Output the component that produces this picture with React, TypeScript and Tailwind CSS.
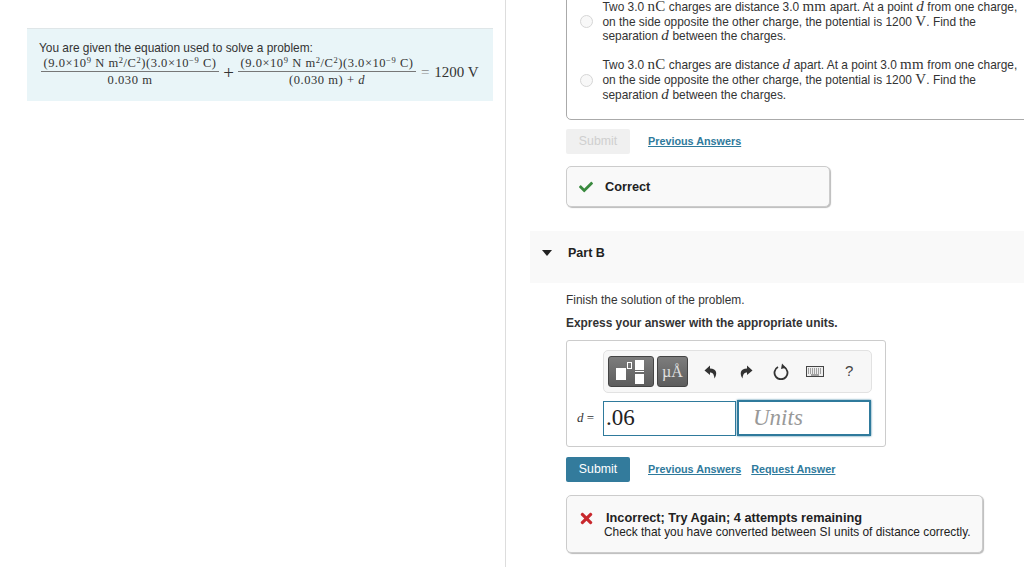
import { FaCheck, FaTimes } from "react-icons/fa";

const sans = "font-['Liberation_Sans',Arial,sans-serif]";
const serif = "font-['Liberation_Serif','Times_New_Roman',serif]";

function Numerator() {
    return (
        <span>
            (9.0×10<sup className="text-[8.5px] leading-none">9</sup> N m<sup className="text-[8.5px] leading-none">2</sup>/C<sup className="text-[8.5px] leading-none">2</sup>)(3.0×10<sup className="text-[8.5px] leading-none">−9</sup> C)
        </span>
    );
}

function Fraction({ children }: { children: React.ReactNode }) {
    return (
        <div className="flex flex-col items-center w-[178px] text-[12.5px] tracking-[0.55px] leading-[14px] text-[#333]">
            <div className="pb-[1px] whitespace-nowrap"><Numerator /></div>
            <div className="w-full border-t border-[#777] pt-[1px] text-center">{children}</div>
        </div>
    );
}

function Choice({ first }: { first: boolean }) {
    const math = `${serif} text-[15px] leading-[0] tracking-[0.3px]`;
    return (
        <div className="flex items-center">
            <div className="w-[13px] h-[13px] rounded-full border border-[#d6d6d6] bg-[#f8f8f8] ml-[13px] mr-[9.5px] shrink-0" />
            <p className="text-[11.9px] leading-[14.6px] text-[#333] whitespace-nowrap">
                {first ? (
                    <>
                        Two 3.0 <span className={math}>nC</span> charges are distance 3.0 <span className={math}>mm</span> apart. At a point <i className={math}>d</i> from one charge,
                    </>
                ) : (
                    <>
                        Two 3.0 <span className={math}>nC</span> charges are distance <i className={math}>d</i> apart. At a point 3.0 <span className={math}>mm</span> from one charge,
                    </>
                )}
                <br />
                on the side opposite the other charge, the potential is 1200 <span className={math}>V</span>. Find the
                <br />
                separation <i className={math}>d</i> between the charges.
            </p>
        </div>
    );
}

function LinkText({ children }: { children: React.ReactNode }) {
    return <a className="text-[10.8px] font-bold text-[#2f7a9c] underline">{children}</a>;
}

function Toolbar() {
    return (
        <div className="ml-[36px] w-[269px] h-[43px] rounded-[5px] border border-[#e2e2e2] bg-[#f7f7f7] flex items-center pl-[4px]">
            <div className="relative w-[46px] h-[31px] rounded-[3px] border border-[#444] bg-gradient-to-b from-[#7d7d7d] to-[#5d5d5d]">
                <div className="absolute left-[7px] top-[11px] w-[10px] h-[12px] bg-white" />
                <div className="absolute left-[18px] top-[5px] w-[5px] h-[7px] border border-white" />
                <div className="absolute left-[26px] top-[3px] w-[9px] h-[10px] bg-white" />
                <div className="absolute left-[26px] top-[14px] w-[9px] h-[1px] bg-white" />
                <div className="absolute left-[26px] top-[17px] w-[9px] h-[10px] bg-white" />
            </div>
            <div className={`ml-[3px] w-[31px] h-[31px] rounded-[3px] border border-[#444] bg-gradient-to-b from-[#7d7d7d] to-[#5d5d5d] flex items-center justify-center text-[#e0e0e0] text-[16px] ${serif}`}>
                µÅ
            </div>
            <svg className="ml-[16px]" width="14" height="14" viewBox="0 0 14 14">
                <path d="M6 0.5 L0.5 5.5 L6 10 V7.5 C9 7.5 10 9.5 10.5 13.5 C13.5 9 13 3.5 6 3.5 Z" fill="#333" />
            </svg>
            <svg className="ml-[21px]" width="14" height="14" viewBox="0 0 14 14">
                <path d="M8 0.5 L13.5 5.5 L8 10 V7.5 C5 7.5 4 9.5 3.5 13.5 C0.5 9 1 3.5 8 3.5 Z" fill="#333" />
            </svg>
            <svg className="ml-[20px]" width="16" height="17" viewBox="0 0 16 17">
                <path d="M5 4 A6.5 6.5 0 1 0 11 4" fill="none" stroke="#333" strokeWidth="1.8" />
                <path d="M9 0.5 L13 4.8 L8 6 Z" fill="#333" />
            </svg>
            <svg className="ml-[17px]" width="18" height="11" viewBox="0 0 18 11">
                <rect x="0.5" y="0.5" width="17" height="10" fill="#eee" stroke="#444" />
                <path d="M2 3 H16 M2 5 H16 M2 7 H16" stroke="#555" strokeDasharray="1 1" />
                <path d="M5 9 H13" stroke="#555" />
            </svg>
            <span className="ml-[21px] text-[15px] text-[#444]">?</span>
        </div>
    );
}

export default function App() {
    return (
        <div className={`${sans} w-[1024px] h-[567px] flex overflow-hidden bg-white`}>
            {/* Left panel */}
            <div className="w-[506px] h-full shrink-0 border-r border-[#ddd] pt-[28px] pl-[27px]">
                <div className="w-[466px] h-[73px] bg-[#e9f5f8] border-t border-[#dfe6e8] pt-[12px] pl-[14px]">
                    <p className="-ml-[2px] text-[11.9px] leading-[14px] text-[#333]">You are given the equation used to solve a problem:</p>
                    <div className={`${serif} flex items-center mt-[1px]`}>
                        <Fraction>0.030 m</Fraction>
                        <span className="text-[19px] leading-none w-[19px] mt-[2px] text-center text-[#333]">+</span>
                        <Fraction>
                            (0.030 m) + <i>d</i>
                        </Fraction>
                        <span className="text-[15px] text-[#333] ml-[5px] mt-[1px] whitespace-nowrap"><span className="text-[#888] mr-[1px]">=</span> 1200 V</span>
                    </div>
                </div>
            </div>

            {/* Right panel */}
            <div className="flex-1 min-w-0 pl-[24px]">
                <div className="pl-[36px]">
                    <div className="w-[480px] h-[121px] -mt-[1px] border border-[#aaa] rounded-bl-[5px] flex flex-col gap-[14.6px]">
                        <Choice first />
                        <Choice first={false} />
                    </div>
                    <div className="flex items-center mt-[9px] h-[25px]">
                        <div className="w-[64px] h-[25px] rounded-[2px] bg-[#f0f0f0] text-[#cfcfcf] text-[12.3px] flex items-center justify-center">Submit</div>
                        <div className="ml-[18px] -mt-[3px]"><LinkText>Previous Answers</LinkText></div>
                    </div>
                    <div className="mt-[12px] w-[264px] h-[41px] rounded-[5px] border border-[#ccc] bg-[#f9f9f9] shadow-[1px_1px_1px_#bbb] flex items-center pl-[12px]">
                        <FaCheck size={14} className="text-[#3a8a3f]" />
                        <span className="ml-[12px] mt-[1px] text-[12.75px] font-bold text-[#222]">Correct</span>
                    </div>
                </div>

                <div className="mt-[24px] h-[52px] bg-[#f9f9f9] flex items-center pl-[12px] pb-[8px]">
                    <div className="w-0 h-0 border-l-[5px] border-r-[5px] border-t-[6px] border-l-transparent border-r-transparent border-t-[#222]" />
                    <span className="ml-[16px] text-[12.5px] font-bold text-[#222]">Part B</span>
                </div>

                <div className="pl-[36px]">
                    <p className="mt-[10px] text-[11.9px] leading-[14px] text-[#333]">Finish the solution of the problem.</p>
                    <p className="mt-[9px] text-[11.9px] leading-[14px] font-bold text-[#333]">Express your answer with the appropriate units.</p>

                    <div className="mt-[10px] w-[320px] h-[107px] rounded-[3px] border border-[#ccc] pt-[9px]">
                        <Toolbar />
                        <div className="flex items-center mt-[7px] ml-[10px]">
                            <span className={`${serif} text-[13px] text-[#333] w-[26px]`}><i>d</i> =</span>
                            <div className={`${serif} w-[133px] h-[35px] border border-[#2f7a9c] text-[23px] text-[#222] flex items-center pl-[2px]`}>.06</div>
                            <div className={`${serif} w-[134px] h-[36px] ml-[1px] border-2 border-[#2f7a9c] shadow-[0_0_2px_#2f7a9c] text-[23px] italic text-[#999] flex items-center pl-[14px]`}>Units</div>
                        </div>
                    </div>

                    <div className="flex items-center mt-[10px] h-[25px]">
                        <div className="w-[64px] h-[25px] rounded-[2px] bg-[#337b9c] text-white text-[12.3px] flex items-center justify-center">Submit</div>
                        <div className="ml-[18px] -mt-[3px]"><LinkText>Previous Answers</LinkText></div>
                        <div className="ml-[10px] -mt-[3px]"><LinkText>Request Answer</LinkText></div>
                    </div>

                    <div className="mt-[13px] w-[417px] h-[58px] rounded-[5px] border border-[#ccc] bg-[#f9f9f9] shadow-[1px_1px_1px_#bbb] flex pl-[12px] pt-[15px]">
                        <FaTimes size={17} className="text-[#c8282d] shrink-0 -mt-[1px] -ml-[1px]" />
                        <div className="ml-[9px]">
                            <p className="text-[12.75px] leading-[14px] font-bold text-[#222] pl-[2px]">Incorrect; Try Again; 4 attempts remaining</p>
                            <p className="text-[11.9px] leading-[15px] text-[#222]">Check that you have converted between SI units of distance correctly.</p>
                        </div>
                    </div>
                </div>
            </div>
        </div>
    );
}
